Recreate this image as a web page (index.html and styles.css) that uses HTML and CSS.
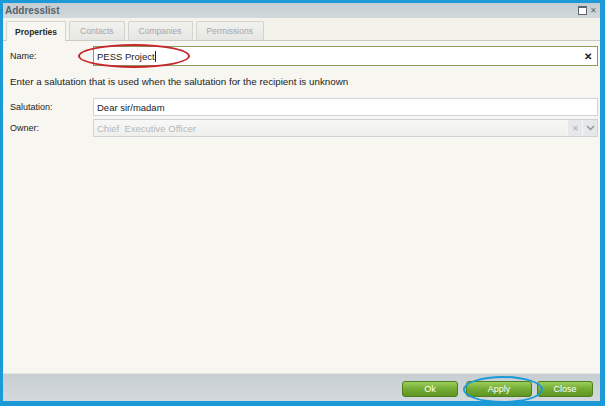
FILE: index.html
```html
<!DOCTYPE html>
<html>
<head>
  <meta charset="UTF-8" />
  <title>Addresslist</title>
  <link rel="stylesheet" href="styles.css">
</head>
<body>
  <div class="window">
    <div class="title-bar">
      <span class="title">Addresslist</span>
      <div class="title-tools">
        <span class="tool tool-max"></span>
        <span class="tool tool-close">&#x2715;</span>
      </div>
    </div>
    <div class="tab-strip">
      <div class="tab active">Properties</div>
      <div class="tab">Contacts</div>
      <div class="tab">Companies</div>
      <div class="tab">Permissions</div>
    </div>
    <div class="content">
      <div class="row row-name">
        <label class="field-label">Name:</label>
        <div class="input input-focus">
          <span class="value">PESS Project</span><span class="caret"></span>
          <span class="clear">&#x2715;</span>
        </div>
      </div>
      <p class="hint">Enter a salutation that is used when the salutation for the recipient is unknown</p>
      <div class="row">
        <label class="field-label">Salutation:</label>
        <div class="input"><span class="value">Dear sir/madam</span></div>
      </div>
      <div class="row">
        <label class="field-label">Owner:</label>
        <div class="input input-disabled">
          <span class="value">Chief&nbsp; Executive Officer</span>
          <span class="combo-btn">&#x2715;</span>
          <span class="combo-btn combo-arrow">
            <svg width="9" height="6" viewBox="0 0 9 6"><path d="M1 1 L4.5 4.5 L8 1" fill="none" stroke="#8a97a3" stroke-width="1.5"/></svg>
          </span>
        </div>
      </div>
    </div>
    <div class="footer">
      <button class="btn">Ok</button>
      <button class="btn btn-apply">Apply</button>
      <button class="btn">Close</button>
    </div>
    <div class="mark mark-red"></div>
    <div class="mark mark-blue"></div>
  </div>
</body>
</html>
```

FILE: styles.css
```css
body {
  margin: 0;
  font-family: "Liberation Sans", Arial, sans-serif;
  font-size: 9px;
  color: #1c1c1c;
}
.window {
  position: relative;
  box-sizing: border-box;
  width: 605px;
  height: 406px;
  border-style: solid;
  border-color: #1b9ad7;
  border-width: 3px 5px 5px 3px;
  box-shadow: inset 0 -1px 0 #0d6aa0;
  display: flex;
  flex-direction: column;
  background: #f7f6f0;
}
.title-bar {
  height: 15px;
  display: flex;
  align-items: center;
  justify-content: space-between;
  padding: 0 2px 0 2px;
  background: linear-gradient(#c3ccd1, #d3dade);
}
.title {
  font-weight: bold;
  font-size: 10px;
  color: #56626c;
}
.title-tools {
  display: flex;
  gap: 2px;
}
.tool {
  width: 9px;
  height: 9px;
  box-sizing: border-box;
  font-size: 8px;
  line-height: 9px;
  text-align: center;
  color: #606a72;
}
.tool-max {
  border: 1px solid #5d666e;
  border-top-width: 2px;
  background: #fff;
}
.tab-strip {
  height: 22px;
  display: flex;
  align-items: flex-end;
  gap: 3px;
  padding: 0 0 0 3px;
  background: #f3f2eb;
  border-bottom: 1px solid #c9cbc4;
}
.tab {
  height: 19px;
  box-sizing: border-box;
  border: 1px solid #d3d4cf;
  border-bottom: none;
  border-radius: 2px 2px 0 0;
  background: linear-gradient(#f1f1ee, #e6e6e2);
  color: #a4a8ab;
  display: flex;
  align-items: center;
  justify-content: center;
  padding: 0 10px;
  font-size: 8.5px;
}
.tab.active {
  background: #f7f6f0;
  color: #2a2a2a;
  font-weight: bold;
  height: 20px;
  margin-bottom: -1px;
  padding: 0 8px;
}
.content {
  flex: 1;
  padding: 5px 2px 0 7px;
}
.row {
  display: flex;
  align-items: center;
  margin-bottom: 3px;
}
.field-label {
  width: 83px;
  flex-shrink: 0;
}
.input {
  flex: 1;
  height: 18px;
  box-sizing: border-box;
  border: 1px solid #cfd3d6;
  background: #fff;
  display: flex;
  align-items: center;
  padding-left: 3px;
}
.input-focus {
  height: 20px;
  border-color: #8b9c5b;
}
.row-name {
  margin-bottom: 10px;
}
.value {
  font-size: 9.5px;
}
.caret {
  width: 1px;
  height: 11px;
  background: #222;
}
.clear {
  margin-left: auto;
  margin-right: 5px;
  font-size: 10px;
  font-weight: bold;
  color: #222;
}
.hint {
  margin: 0 0 11px 0;
  font-size: 9.8px;
}
.input-disabled {
  background: linear-gradient(#f8f8f6, #efefec);
  color: #b4b9bd;
}
.combo-btn {
  width: 14px;
  height: 16px;
  display: flex;
  align-items: center;
  justify-content: center;
  background: #e5e7e8;
  border-left: 1px solid #f5f5f5;
  color: #9fb0c0;
  font-size: 8px;
}
.input-disabled .combo-btn:nth-child(2) {
  margin-left: auto;
}
.footer {
  height: 28px;
  box-sizing: border-box;
  display: flex;
  justify-content: flex-end;
  align-items: center;
  gap: 5px;
  padding: 2px 7px 0 0;
  background: linear-gradient(#c8cfd2, #d3d9dc);
  border-top: 1px solid #e4e6e2;
}
.btn {
  width: 56px;
  height: 16px;
  padding: 0;
  border: 1px solid #4f7f1c;
  border-radius: 3px;
  background: linear-gradient(#9cce5c, #73ab33 50%, #5f9624);
  color: #fff;
  font-family: "Liberation Sans", Arial, sans-serif;
  font-size: 9px;
}
.btn-apply {
  width: 66px;
  margin-left: 3px;
}
.mark {
  position: absolute;
  border-radius: 50%;
  box-sizing: border-box;
}
.mark-red {
  left: 75px;
  top: 41px;
  width: 112px;
  height: 24px;
  border: 2px solid #c8242b;
}
.mark-blue {
  left: 460px;
  top: 373px;
  width: 80px;
  height: 27px;
  border: 2px solid #1a9ad7;
}
```
